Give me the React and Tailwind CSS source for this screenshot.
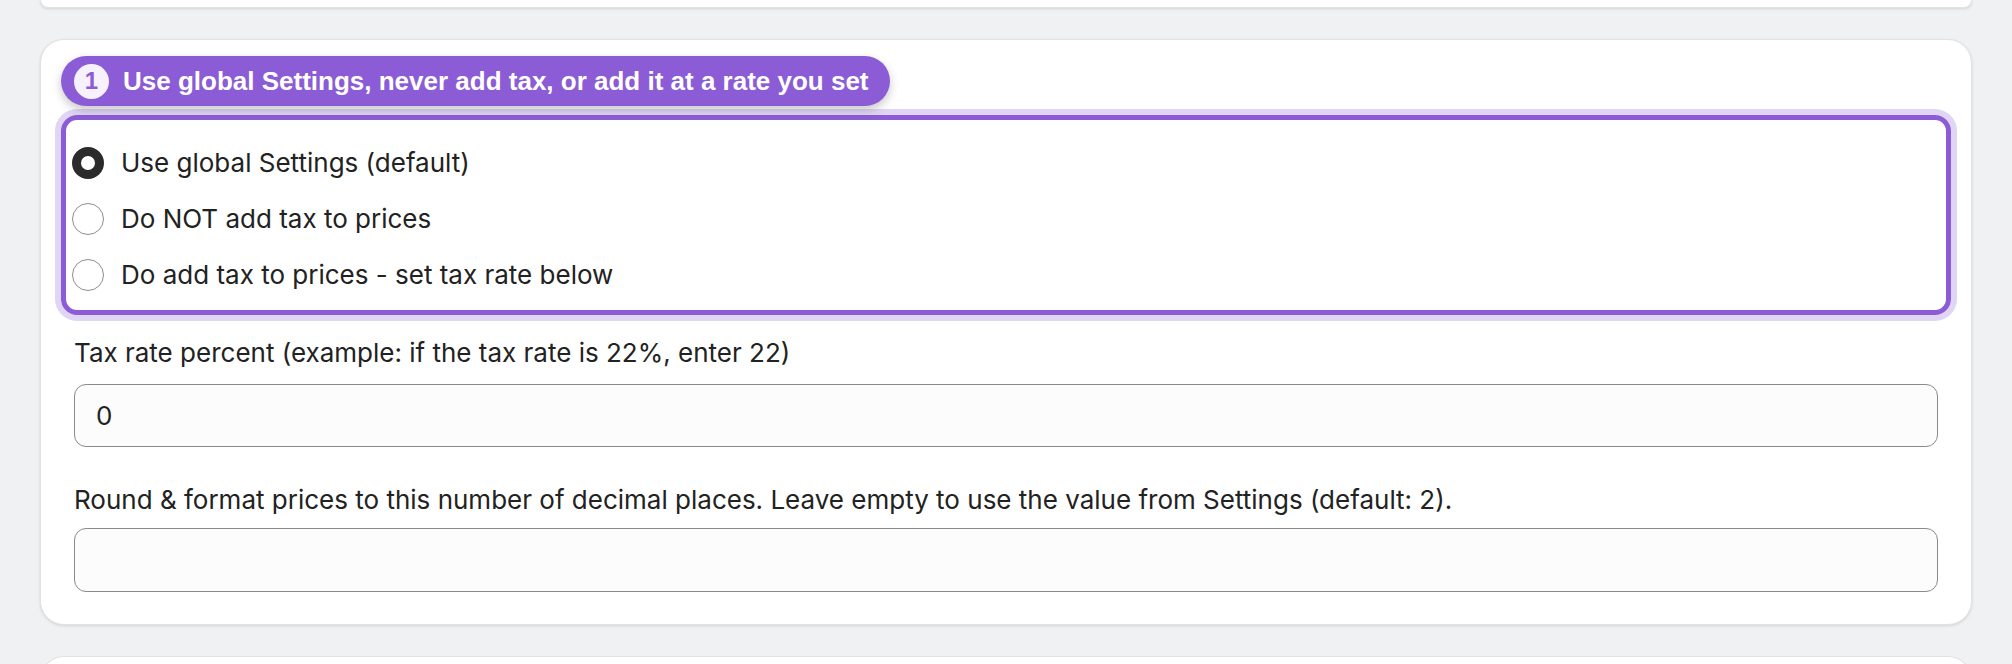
import React from "react";

function Radio({ checked, label }) {
  return (
    <label className="flex h-14 items-center gap-[17px] pl-[6px]">
      {checked ? (
        <span className="box-border block h-[32px] w-[32px] shrink-0 rounded-full border-[9px] border-[#2b2b2b] bg-white" />
      ) : (
        <span className="box-border block h-[32px] w-[32px] shrink-0 rounded-full border border-[#8d8d8d] bg-white" />
      )}
      <span className="text-[26px] leading-[32px] text-[#222222]">{label}</span>
    </label>
  );
}

export default function App() {
  return (
    <div
      className="min-h-[664px] overflow-hidden bg-[#f0f1f3] px-10"
      style={{ fontFamily: "Inter, 'Noto Sans', sans-serif" }}
    >
      <div className="h-[8px] rounded-b-[24px] border border-t-0 border-[#e2e2e2] bg-white shadow-[0_1px_3px_rgba(0,0,0,0.12)]" />

      <div className="mt-[31px] rounded-[24px] border border-[#e2e2e2] bg-white px-5 pb-[32px] pt-[16px] shadow-[0_1px_3px_rgba(0,0,0,0.12)]">
        <div
          className="inline-flex h-[50px] items-center gap-[14px] rounded-full bg-[#8b5cd6] pl-[13px] pr-[21px] shadow-[0_4px_10px_rgba(0,0,0,0.22)]"
          style={{ fontFamily: "'Liberation Sans', Arial, sans-serif" }}
        >
          <span className="flex h-[35px] w-[35px] items-center justify-center rounded-full bg-[#f6f1fd] text-[24px] font-bold text-[#8b5cd6]">
            1
          </span>
          <span className="text-[26px] font-bold text-white">
            Use global Settings, never add tax, or add it at a rate you set
          </span>
        </div>

        <div className="mt-[9px] rounded-[16px] border-[5px] border-[#8b5cd6] pb-[7px] pt-[15px] shadow-[0_0_0_6px_#e0d5f5]">
          <Radio checked label="Use global Settings (default)" />
          <Radio label="Do NOT add tax to prices" />
          <Radio label="Do add tax to prices - set tax rate below" />
        </div>

        <div className="px-[13px]">
          <div className="mt-[22px] text-[26px] leading-[32px] text-[#222222]">
            Tax rate percent (example: if the tax rate is 22%, enter 22)
          </div>
          <div className="mt-[15px] flex h-[63px] items-center rounded-[12px] border border-[#8a8a8a] bg-[#fcfcfc] px-[21px] text-[26px] text-[#222222]">
            0
          </div>

          <div className="mt-[37px] text-[26px] leading-[32px] text-[#222222]">
            Round &amp; format prices to this number of decimal places. Leave empty to use the value from Settings (default: 2).
          </div>
          <div className="mt-[12px] h-[64px] rounded-[12px] border border-[#8a8a8a] bg-[#fcfcfc]" />
        </div>
      </div>

      <div className="mt-[31px] h-[40px] rounded-t-[24px] border border-b-0 border-[#e2e2e2] bg-white" />
    </div>
  );
}
